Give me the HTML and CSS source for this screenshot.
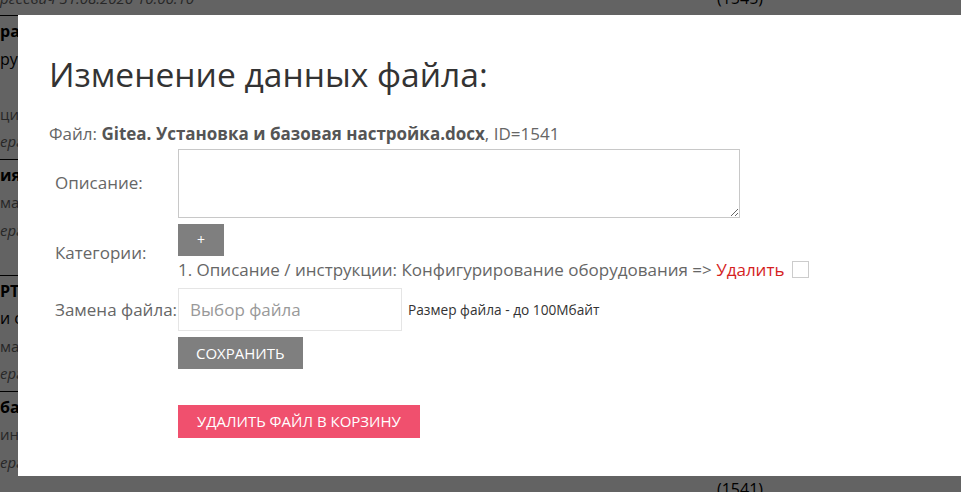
FILE: index.html
```html
<!DOCTYPE html>
<html lang="ru">
<head>
<meta charset="utf-8">
<title>Изменение данных файла</title>
<link rel="stylesheet" href="styles.css">
</head>
<body>
<div class="page">
  <div class="item item-top">
    <div class="row author"><span>ргеевич 31.08.2026 10:06:10</span><span class="num">(1545)</span></div>
  </div>
  <div class="item">
    <div class="row title">ра</div>
    <div class="row desc">ру</div>
    <div class="row desc"></div>
    <div class="row cat">ций</div>
    <div class="row author"><span>ерге</span><span class="num"></span></div>
  </div>
  <div class="item">
    <div class="row title">ия</div>
    <div class="row cat">ма</div>
    <div class="row author"><span>ерге</span><span class="num"></span></div>
    <div class="row"></div>
  </div>
  <div class="item">
    <div class="row title">РТ</div>
    <div class="row desc">и с</div>
    <div class="row cat">ма</div>
    <div class="row author"><span>ерге</span><span class="num"></span></div>
  </div>
  <div class="item">
    <div class="row title">ба</div>
    <div class="row cat">ин</div>
    <div class="row author"><span>ерге</span><span class="num"></span></div>
    <div class="row author"><span></span><span class="num">(1541)</span></div>
  </div>
</div>

<div class="overlay"></div>

<div class="modal">
  <h2 class="modal-title">Изменение данных файла:</h2>
  <p class="file-info">Файл: <b>Gitea. Установка и базовая настройка.docx</b>, ID=1541</p>
  <div class="form">
    <div class="label">Описание:</div>
    <div class="field"><textarea class="textarea"></textarea></div>

    <div class="label">Категории:</div>
    <div class="field">
      <button class="btn btn-grey btn-plus" type="button">+</button>
      <div class="cat-line">1. Описание / инструкции: Конфигурирование оборудования =&gt; <a class="del" href="#">Удалить</a> <input type="checkbox" class="chk"></div>
    </div>

    <div class="label">Замена файла:</div>
    <div class="field file-row">
      <div class="file-box">Выбор файла</div>
      <span class="hint">Размер файла - до 100Мбайт</span>
    </div>

    <div class="label"></div>
    <div class="field"><button class="btn btn-grey" type="button">Сохранить</button></div>
  </div>
  <button class="btn btn-danger" type="button">Удалить файл в корзину</button>
</div>
</body>
</html>
```

FILE: styles.css
```css
html, body {
  margin: 0;
  padding: 0;
  background: #fff;
  font-family: "Open Sans", "Noto Sans", sans-serif;
  overflow: hidden;
  height: 100%;
}

/* background page */
.page {
  margin-top: -15.5px;
}
.item {
  padding: 2px 0 3px;
  border-bottom: 1px solid #000;
}
.item-top {
  padding-top: 0;
}
.row {
  height: 27.5px;
  line-height: 27.5px;
  font-size: 16px;
  color: #000;
  white-space: nowrap;
}
.row.title { font-weight: 700; }
.row.cat { color: #666; font-size: 15px; }
.row.author {
  display: grid;
  grid-template-columns: 717px auto;
  font-style: italic;
  color: #666;
  font-size: 15px;
}
.row.author .num {
  font-style: normal;
  color: #000;
  font-size: 16px;
}

.overlay {
  position: fixed;
  inset: 0;
  background: rgba(0, 0, 0, 0.61);
}

/* modal */
.modal {
  position: absolute;
  top: 15px;
  left: 18px;
  right: 0;
  bottom: 16px;
  background: #fff;
  padding: 30px;
  box-sizing: border-box;
  color: #666;
  font-size: 17px;
  line-height: 24px;
}
.modal-title {
  margin: 8px 0 0 1px;
  font-size: 33.6px;
  line-height: 1.3;
  font-weight: 400;
  color: #333;
}
.file-info {
  margin: 25px 0 3px 1px;
  line-height: 24px;
}
.file-info b {
  color: #555;
  font-weight: 700;
}

.form {
  display: grid;
  grid-template-columns: 130px auto;
  row-gap: 6px;
  align-items: center;
}
.label {
  padding-left: 7px;
}
.field {
  min-width: 0;
}
.textarea {
  display: block;
  width: 562px;
  height: 69px;
  box-sizing: border-box;
  border: 1px solid #c8c8c8;
  margin: 0;
  padding: 4px 6px;
  font: inherit;
}

.btn {
  display: inline-block;
  border: none;
  margin: 0;
  height: 32px;
  padding: 0 18px;
  font-family: "Open Sans", "Noto Sans", sans-serif;
  font-size: 15px;
  line-height: 32px;
  color: #fff;
  text-transform: uppercase;
  cursor: pointer;
  vertical-align: top;
}
.btn-grey { background: #7f7f7f; }
.btn-plus {
  display: block;
  width: 46px;
  padding: 0;
  font-size: 14px;
}
.btn-danger {
  margin-top: 36px;
  margin-left: 130px;
  height: 33px;
  line-height: 33px;
  padding: 0 19px;
  background: #f0506e;
}

.cat-line {
  margin-top: 2.5px;
  white-space: nowrap;
}
.del {
  color: #d51f1f;
  text-decoration: none;
}
.chk {
  appearance: none;
  -webkit-appearance: none;
  width: 17px;
  height: 17px;
  margin: 0 0 0 3px;
  border: 1px solid #ccc;
  background: #fff;
  box-sizing: border-box;
  vertical-align: -2px;
}

.file-row {
  display: flex;
  align-items: center;
  gap: 6px;
}
.file-box {
  width: 224px;
  height: 43px;
  box-sizing: border-box;
  border: 1px solid #e5e5e5;
  padding: 0 11px;
  line-height: 41px;
  font-size: 17px;
  color: #999;
}
.hint {
  font-size: 13.7px;
  color: #333;
}
```
